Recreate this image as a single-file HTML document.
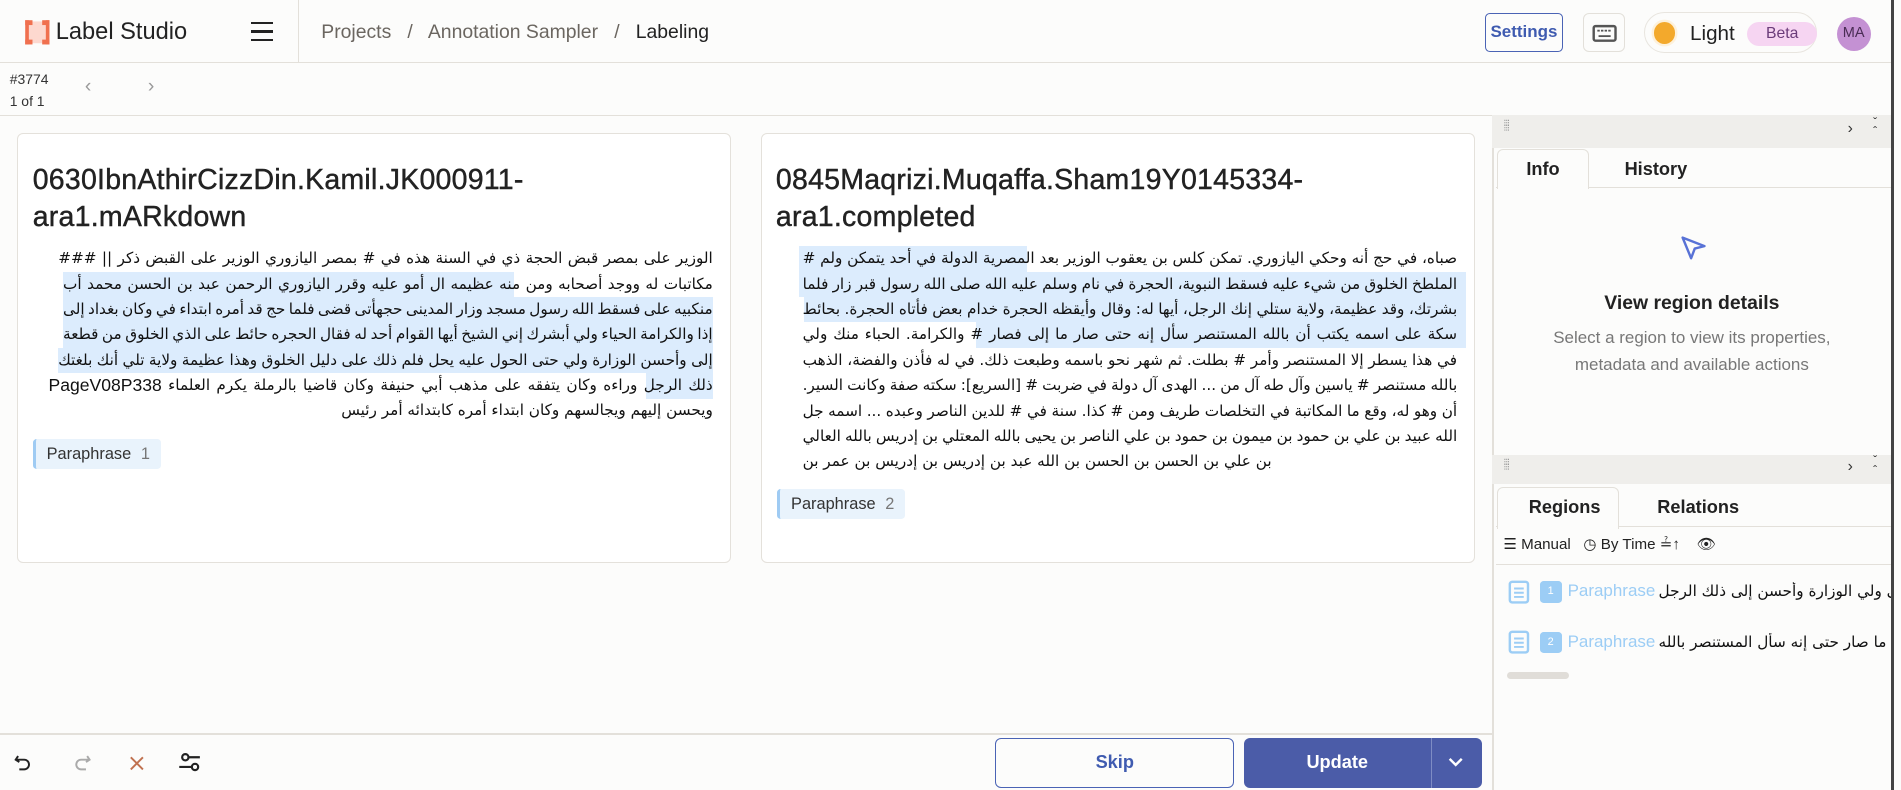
<!DOCTYPE html>
<html><head><meta charset="utf-8"><style>
*{box-sizing:border-box;margin:0;padding:0}
html,body{width:1901px;height:790px;overflow:hidden;background:#fcfcfb}
body{font-family:"Liberation Sans",sans-serif;color:#1f1f1f}
.app{position:relative;width:1568px;height:652px;zoom:1.21237;background:#fcfcfb}
.abs{position:absolute}
.hdr{left:0;top:0;width:1560px;height:52px;border-bottom:1px solid #e3e0da}
.crumb{font-size:16px;color:#6b6660}
.btn{border-radius:4px}
.card{background:#fff;border:1px solid #e4e1db;border-radius:5px}
.title{font-size:23.5px;line-height:30px;color:#222;letter-spacing:.2px;-webkit-text-stroke:0.35px #222}
.txt{font-family:"DejaVu Sans","Liberation Sans",sans-serif;font-size:12.6px;color:#111}
.ln{position:absolute;display:flex;justify-content:space-between;height:21px;line-height:21px;white-space:nowrap}
.ln.end{justify-content:flex-end;gap:4px}
.ln span{direction:rtl;unicode-bidi:isolate}
.hl{position:absolute;background:#dcecfd;height:21px}
.tag{font-size:13.5px;color:#333;background:#e9f3fc;border-left:3px solid #9fcbf3;border-radius:3px;height:25px;line-height:25px;padding:0 9px}
.tag b{font-weight:400;color:#777;margin-left:8px}
.ph{background:#efeeeb;height:27px;left:1231px;width:329px}
.tab{font-size:15px;font-weight:600;color:#222}
.rt{font-family:"DejaVu Sans","Liberation Sans",sans-serif;font-size:12.6px;color:#111;direction:ltr;text-align:left;white-space:nowrap;overflow:hidden}
</style></head><body><div class="app">

<!-- header -->
<div class="abs hdr"></div>
<div class="abs" style="left:20px;top:16px;width:22px;height:22px">
<svg width="22" height="22" viewBox="0 0 22 22"><rect x="3" y="2" width="16" height="18" fill="#fdd8cf"/><rect x="1" y="1" width="6" height="4" fill="#f0704f"/><rect x="15" y="1" width="6" height="4" fill="#f0704f"/><rect x="1" y="17" width="6" height="4" fill="#f0704f"/><rect x="15" y="17" width="6" height="4" fill="#f0704f"/><rect x="1" y="1" width="3" height="20" fill="#f0704f"/><rect x="18" y="1" width="3" height="20" fill="#f0704f"/></svg></div>
<div class="abs" style="left:46px;top:16px;font-size:19.5px;color:#222">Label Studio</div>
<div class="abs" style="left:207px;top:18px;width:18px">
<div style="height:2px;background:#222;margin-bottom:5px"></div><div style="height:2px;background:#222;margin-bottom:5px"></div><div style="height:2px;background:#222"></div></div>
<div class="abs" style="left:246px;top:0;width:1px;height:52px;background:#e3e0da"></div>
<div class="abs crumb" style="left:265px;top:17px">Projects &nbsp;&nbsp;/&nbsp;&nbsp; Annotation Sampler &nbsp;&nbsp;/&nbsp;&nbsp; <span style="color:#222">Labeling</span></div>
<div class="abs btn" style="left:1225px;top:11px;width:64px;height:32px;border:1px solid #4a63b5;color:#3f5bb0;font-size:14px;font-weight:600;text-align:center;line-height:30px">Settings</div>
<div class="abs btn" style="left:1306px;top:11px;width:34px;height:32px;border:1px solid #e3e0da;border-radius:5px">
<svg width="34" height="32" viewBox="0 0 34 32"><rect x="8" y="10" width="18" height="12" rx="1.5" fill="none" stroke="#555" stroke-width="2"/><g fill="#555"><rect x="11" y="13" width="2" height="1.5"/><rect x="14" y="13" width="2" height="1.5"/><rect x="17" y="13" width="2" height="1.5"/><rect x="20" y="13" width="2" height="1.5"/><rect x="12" y="17.5" width="10" height="1.5"/></g></svg></div>
<div class="abs" style="left:1356px;top:10px;width:143px;height:34px;border:1px solid #e8e5df;border-radius:17px"></div>
<div class="abs" style="left:1364px;top:18px;width:18px;height:18px;border-radius:50%;background:#f3a92c;box-shadow:0 0 0 2px #fdf1dc"></div>
<div class="abs" style="left:1394px;top:18px;font-size:17px;color:#222">Light</div>
<div class="abs" style="left:1441px;top:18px;width:58px;height:20px;border-radius:10px;background:#f6d5f2;color:#6b3c7a;font-size:13px;text-align:center;line-height:20px">Beta</div>
<div class="abs" style="left:1515px;top:14px;width:28px;height:28px;border-radius:50%;background:#c491d3;color:#4a2c55;font-size:12px;text-align:center;line-height:28px">MA</div>
<div class="abs" style="left:1560px;top:0;width:2px;height:652px;background:#444"></div>

<!-- subheader -->
<div class="abs" style="left:8px;top:57px;font-size:11.5px;color:#333;line-height:18px">#3774<br>1 of 1</div>
<div class="abs" style="left:70px;top:62px;font-size:16px;color:#999">&#x2039;</div>
<div class="abs" style="left:122px;top:62px;font-size:16px;color:#999">&#x203A;</div>
<div class="abs" style="left:0;top:95px;width:1231px;height:1px;background:#e3e0da"></div>

<!-- card 1 -->
<div class="abs card" style="left:14px;top:110px;width:589px;height:354px"></div>
<div class="abs title" style="left:27px;top:134px">0630IbnAthirCizzDin.Kamil.JK000911-<br>ara1.mARkdown</div>
<div class="txt">
<div class="hl" style="left:52px;top:224px;width:372px"></div>
<div class="hl" style="left:52px;top:245px;width:536px"></div>
<div class="hl" style="left:52px;top:266px;width:536px"></div>
<div class="hl" style="left:48px;top:287px;width:540px"></div>
<div class="hl" style="left:533px;top:308px;width:55px"></div>
<div class="ln" style="left:48px;top:203px;width:540px"><span>###</span><span>||</span><span>ذكر</span><span>القبض</span><span>على</span><span>الوزير</span><span>اليازوري</span><span>بمصر</span><span>#</span><span>في</span><span>هذه</span><span>السنة</span><span>في</span><span>ذي</span><span>الحجة</span><span>قبض</span><span>بمصر</span><span>على</span><span>الوزير</span></div>
<div class="ln" style="left:52px;top:224px;width:536px"><span>أب</span><span>محمد</span><span>الحسن</span><span>بن</span><span>عبد</span><span>الرحمن</span><span>اليازوري</span><span>وقرر</span><span>عليه</span><span>أمو</span><span>ال</span><span>عظيمه</span><span>منه</span><span>ومن</span><span>أصحابه</span><span>ووجد</span><span>له</span><span>مكاتبات</span></div>
<div class="ln" style="left:52px;top:245px;width:536px"><span>إلى</span><span>بغداد</span><span>وكان</span><span>في</span><span>ابتداء</span><span>أمره</span><span>قد</span><span>حج</span><span>فلما</span><span>قضى</span><span>حجهأتى</span><span>المدينى</span><span>وزار</span><span>مسجد</span><span>رسول</span><span>الله</span><span>فسقط</span><span>على</span><span>منكبيه</span></div>
<div class="ln" style="left:52px;top:266px;width:536px"><span>قطعة</span><span>من</span><span>الخلوق</span><span>الذي</span><span>على</span><span>حائط</span><span>الحجره</span><span>فقال</span><span>له</span><span>أحد</span><span>القوام</span><span>أيها</span><span>الشيخ</span><span>إني</span><span>أبشرك</span><span>ولي</span><span>الحياء</span><span>والكرامة</span><span>إذا</span></div>
<div class="ln" style="left:48px;top:287px;width:540px"><span>بلغتك</span><span>أنك</span><span>تلي</span><span>ولاية</span><span>عظيمة</span><span>وهذا</span><span>الخلوق</span><span>دليل</span><span>على</span><span>ذلك</span><span>فلم</span><span>يحل</span><span>عليه</span><span>الحول</span><span>حتى</span><span>ولي</span><span>الوزارة</span><span>وأحسن</span><span>إلى</span></div>
<div class="ln" style="left:40px;top:308px;width:548px"><span style="font-family:'Liberation Sans';font-size:14.5px">PageV08P338</span><span>العلماء</span><span>يكرم</span><span>بالرملة</span><span>قاضيا</span><span>وكان</span><span>حنيفة</span><span>أبي</span><span>مذهب</span><span>على</span><span>يتفقه</span><span>وكان</span><span>وراءه</span><span>الرجل</span><span>ذلك</span></div>
<div class="ln end" style="left:200px;top:328px;width:388px"><span>رئيس</span><span>أمر</span><span>كابتدائه</span><span>أمره</span><span>ابتداء</span><span>وكان</span><span>ويجالسهم</span><span>إليهم</span><span>ويحسن</span></div>
</div>
<div class="abs tag" style="left:27px;top:362px">Paraphrase<b>1</b></div>

<!-- card 2 -->
<div class="abs card" style="left:628px;top:110px;width:589px;height:354px"></div>
<div class="abs title" style="left:640px;top:134px">0845Maqrizi.Muqaffa.Sham19Y0145334-<br>ara1.completed</div>
<div class="txt">
<div class="hl" style="left:659px;top:203px;width:188px"></div>
<div class="hl" style="left:659px;top:224px;width:550px"></div>
<div class="hl" style="left:663px;top:245px;width:546px"></div>
<div class="hl" style="left:805px;top:266px;width:404px"></div>
<div class="ln" style="left:662px;top:203px;width:540px"><span>#</span><span>ولم</span><span>يتمكن</span><span>أحد</span><span>في</span><span>الدولة</span><span>المصرية</span><span>بعد</span><span>الوزير</span><span>يعقوب</span><span>بن</span><span>كلس</span><span>تمكن</span><span>اليازوري.</span><span>وحكي</span><span>أنه</span><span>حج</span><span>في</span><span>صباه،</span></div>
<div class="ln" style="left:662px;top:224px;width:540px"><span>فلما</span><span>زار</span><span>قبر</span><span>رسول</span><span>الله</span><span>صلى</span><span>الله</span><span>عليه</span><span>وسلم</span><span>نام</span><span>في</span><span>الحجرة</span><span>النبوية،</span><span>فسقط</span><span>عليه</span><span>شيء</span><span>من</span><span>الخلوق</span><span>الملطخ</span></div>
<div class="ln" style="left:662px;top:245px;width:540px"><span>بحائط</span><span>الحجرة.</span><span>فأتاه</span><span>بعض</span><span>خدام</span><span>الحجرة</span><span>وأيقظه</span><span>وقال</span><span>له:</span><span>أيها</span><span>الرجل،</span><span>إنك</span><span>ستلي</span><span>ولاية</span><span>عظيمة،</span><span>وقد</span><span>بشرتك،</span></div>
<div class="ln" style="left:662px;top:266px;width:540px"><span>ولي</span><span>منك</span><span>الحباء</span><span>والكرامة.</span><span>#</span><span>فصار</span><span>إلى</span><span>ما</span><span>صار</span><span>حتى</span><span>إنه</span><span>سأل</span><span>المستنصر</span><span>بالله</span><span>أن</span><span>يكتب</span><span>اسمه</span><span>على</span><span>سكة</span></div>
<div class="ln" style="left:662px;top:287px;width:540px"><span>الذهب</span><span>والفضة،</span><span>فأذن</span><span>له</span><span>في</span><span>ذلك.</span><span>وطبعت</span><span>باسمه</span><span>نحو</span><span>شهر</span><span>ثم</span><span>بطلت.</span><span>#</span><span>وأمر</span><span>المستنصر</span><span>إلا</span><span>يسطر</span><span>هذا</span><span>في</span></div>
<div class="ln" style="left:662px;top:308px;width:540px"><span>السير.</span><span>وكانت</span><span>صفة</span><span>سكته</span><span>[السريع]:</span><span>#</span><span>ضربت</span><span>في</span><span>دولة</span><span>آل</span><span>الهدى</span><span>...</span><span>من</span><span>آل</span><span>طه</span><span>وآل</span><span>ياسين</span><span>#</span><span>مستنصر</span><span>بالله</span></div>
<div class="ln" style="left:662px;top:329px;width:540px"><span>جل</span><span>اسمه</span><span>...</span><span>وعبده</span><span>الناصر</span><span>للدين</span><span>#</span><span>في</span><span>سنة</span><span>كذا.</span><span>#</span><span>ومن</span><span>طريف</span><span>التخلصات</span><span>في</span><span>المكاتبة</span><span>ما</span><span>وقع</span><span>له،</span><span>وهو</span><span>أن</span></div>
<div class="ln" style="left:662px;top:350px;width:540px"><span>العالي</span><span>بالله</span><span>إدريس</span><span>بن</span><span>المعتلي</span><span>بالله</span><span>يحيى</span><span>بن</span><span>الناصر</span><span>علي</span><span>بن</span><span>حمود</span><span>بن</span><span>ميمون</span><span>بن</span><span>حمود</span><span>بن</span><span>علي</span><span>بن</span><span>عبيد</span><span>الله</span></div>
<div class="ln end" style="left:662px;top:370px;width:540px;justify-content:flex-start"><span>بن</span><span>عمر</span><span>بن</span><span>إدريس</span><span>بن</span><span>إدريس</span><span>بن</span><span>عبد</span><span>الله</span><span>بن</span><span>الحسن</span><span>بن</span><span>الحسن</span><span>بن</span><span>علي</span><span>بن</span></div>
</div>
<div class="abs tag" style="left:641px;top:403px">Paraphrase<b>2</b></div>

<!-- bottom bar -->
<div class="abs" style="left:0;top:605px;width:1231px;height:1px;background:#e3e0da"></div>
<svg class="abs" style="left:10px;top:619px" width="170" height="20" viewBox="0 0 170 20">
<path d="M5 5 L3 8 L6 10 M3 8 H10 A4 4 0 0 1 10 16 H6" fill="none" stroke="#222" stroke-width="1.6"/>
<path d="M62 5 L64 8 L61 10 M64 8 H57 A4 4 0 0 0 57 16 H61" fill="none" stroke="#aaa" stroke-width="1.6"/>
<path d="M98 6 L108 16 M108 6 L98 16" stroke="#c0714f" stroke-width="1.6"/>
<circle cx="143" cy="6" r="2.6" fill="none" stroke="#222" stroke-width="1.8"/><path d="M146 6 H155 M138 14 H148" stroke="#222" stroke-width="1.8"/><circle cx="151" cy="14" r="2.6" fill="none" stroke="#222" stroke-width="1.8"/>
</svg>
<div class="abs btn" style="left:821px;top:609px;width:197px;height:41px;border:1px solid #4a63b5;color:#3f5bb0;font-size:15px;font-weight:600;text-align:center;line-height:39px;border-radius:5px">Skip</div>
<div class="abs" style="left:1026px;top:609px;width:196px;height:41px;background:#4b5ca8;border-radius:5px"></div>
<div class="abs" style="left:1026px;top:609px;width:154px;height:41px;color:#fff;font-size:15px;font-weight:600;text-align:center;line-height:41px">Update</div>
<div class="abs" style="left:1180px;top:609px;width:1px;height:41px;background:#7e8cc4"></div>
<svg class="abs" style="left:1193px;top:622px" width="16" height="14"><path d="M3 4 L8 9 L13 4" fill="none" stroke="#fff" stroke-width="2"/></svg>

<!-- right panel -->
<div class="abs" style="left:1231px;top:95px;width:1px;height:557px;background:#e3e0da"></div>
<div class="abs ph" style="top:95px"></div>
<div class="abs" style="left:1240px;top:101px;font-size:8px;color:#999;letter-spacing:-1px;line-height:4px">⁝⁝⁝<br>⁝⁝⁝</div>
<div class="abs" style="left:1524px;top:99px;font-size:13px;color:#333">&#x203A;</div>
<div class="abs" style="left:1545px;top:97px;font-size:10px;color:#333;line-height:8px">&#x2c7;<br>&#x2c6;</div>
<div class="abs" style="left:1234px;top:122px;width:326px;height:33px;border-bottom:1px solid #e3e0da"></div>
<div class="abs" style="left:1235px;top:123px;width:76px;height:33px;background:#fcfcfb;border:1px solid #e3e0da;border-bottom:none;border-radius:5px 5px 0 0"></div>
<div class="abs tab" style="left:1259px;top:131px">Info</div>
<div class="abs tab" style="left:1340px;top:131px">History</div>
<svg class="abs" style="left:1385px;top:193px" width="24" height="24" viewBox="0 0 24 24"><path d="M3 3 L21 10 L13 12 L10 20 Z" fill="none" stroke="#5872d6" stroke-width="2" stroke-linejoin="round"/></svg>
<div class="abs" style="left:1231px;top:241px;width:329px;text-align:center;font-size:16px;font-weight:600;color:#222">View region details</div>
<div class="abs" style="left:1231px;top:268px;width:329px;text-align:center;font-size:14px;color:#777;line-height:22px">Select a region to view its properties,<br>metadata and available actions</div>

<div class="abs ph" style="top:375px;height:24px"></div>
<div class="abs" style="left:1240px;top:380px;font-size:8px;color:#999;letter-spacing:-1px;line-height:4px">⁝⁝⁝<br>⁝⁝⁝</div>
<div class="abs" style="left:1524px;top:378px;font-size:13px;color:#333">&#x203A;</div>
<div class="abs" style="left:1545px;top:376px;font-size:10px;color:#333;line-height:8px">&#x2c7;<br>&#x2c6;</div>
<div class="abs" style="left:1234px;top:401px;width:326px;height:34px;border-bottom:1px solid #e3e0da"></div>
<div class="abs" style="left:1235px;top:402px;width:100px;height:34px;background:#fcfcfb;border:1px solid #e3e0da;border-bottom:none;border-radius:5px 5px 0 0"></div>
<div class="abs tab" style="left:1261px;top:410px">Regions</div>
<div class="abs tab" style="left:1367px;top:410px">Relations</div>
<div class="abs" style="left:1240px;top:441px;font-size:12.5px;color:#222;font-weight:500">&#9776; Manual &nbsp; &#9719; By Time ≟↑ &nbsp;&nbsp; 👁︎</div>
<div class="abs" style="left:1234px;top:465px;width:326px;height:1px;background:#e3e0da"></div>
<svg class="abs" style="left:1244px;top:478px" width="18" height="20" viewBox="0 0 18 20"><rect x="1.5" y="1.5" width="15" height="17" rx="2" fill="none" stroke="#9ccdf5" stroke-width="2"/><path d="M5 7H13M5 10.5H13M5 14H13" stroke="#9ccdf5" stroke-width="1.6"/></svg>
<div class="abs" style="left:1270px;top:479px;width:18px;height:18px;background:#9ccdf5;border-radius:3px;color:#fff;font-size:9px;text-align:center;line-height:18px">1</div>
<div class="abs" style="left:1293px;top:479px;font-size:14px;color:#9ccdf5">Paraphrase</div>
<div class="abs rt" style="left:1368px;top:480px;width:192px">عليه الحول حتى ولي الوزارة وأحسن إلى ذلك الرجل</div>
<svg class="abs" style="left:1244px;top:520px" width="18" height="20" viewBox="0 0 18 20"><rect x="1.5" y="1.5" width="15" height="17" rx="2" fill="none" stroke="#9ccdf5" stroke-width="2"/><path d="M5 7H13M5 10.5H13M5 14H13" stroke="#9ccdf5" stroke-width="1.6"/></svg>
<div class="abs" style="left:1270px;top:521px;width:18px;height:18px;background:#9ccdf5;border-radius:3px;color:#fff;font-size:9px;text-align:center;line-height:18px">2</div>
<div class="abs" style="left:1293px;top:521px;font-size:14px;color:#9ccdf5">Paraphrase</div>
<div class="abs rt" style="left:1368px;top:522px;width:192px">فصار إلى ما صار حتى إنه سأل المستنصر بالله</div>
<div class="abs" style="left:1243px;top:554px;width:51px;height:6px;background:#e0ddd8;border-radius:3px"></div>
</div></body></html>
